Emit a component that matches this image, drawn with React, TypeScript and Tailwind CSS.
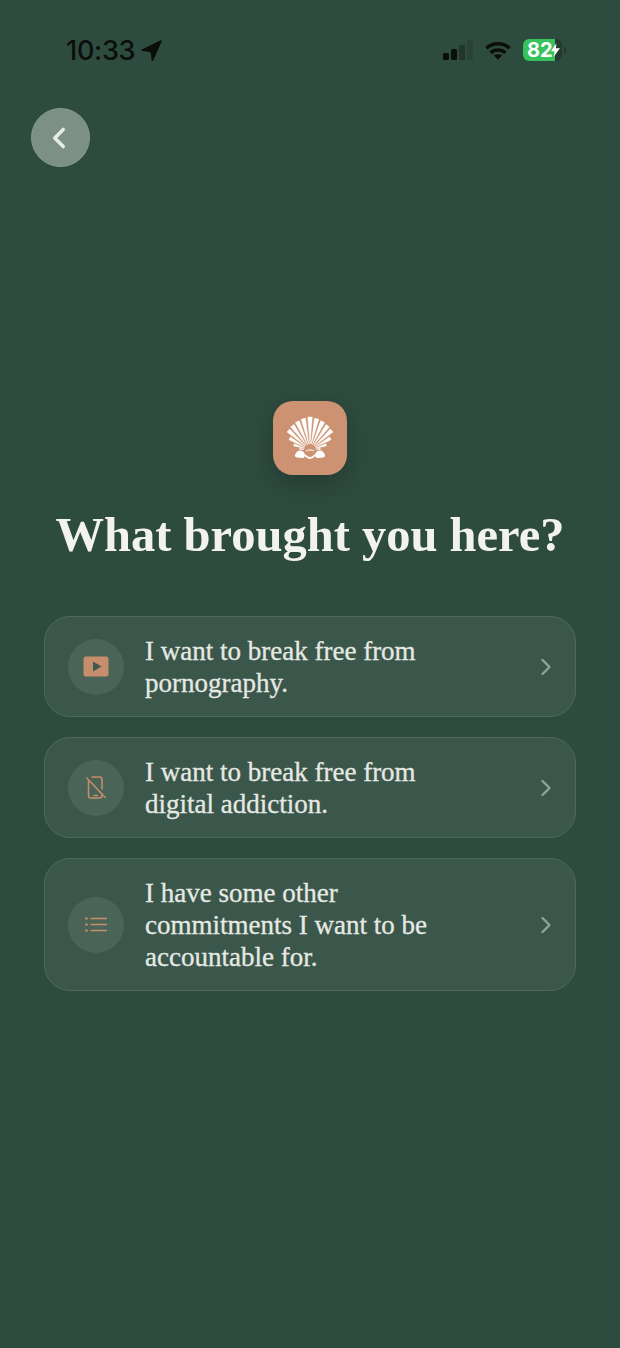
import React from "react";
import { ChevronLeft, ChevronRight } from "lucide-react";

const SERIF = "font-['Liberation_Serif',serif]";

const options = [
  { icon: "play", lines: ["I want to break free from", "pornography."] },
  { icon: "phone", lines: ["I want to break free from", "digital addiction."] },
  { icon: "list", lines: ["I have some other", "commitments I want to be", "accountable for."] },
];

// Fan of ribs for the shell logo
const ribs = Array.from({ length: 15 }, (_, i) => -84 + i * 12);

const ribLength = (angle: number) => {
  const abs = Math.abs(angle);
  return abs <= 50 ? 33 - (abs / 50) * 4 : 29 - (abs - 50) * 0.55;
};

const Shell = () => (
  <svg width="50" height="46" viewBox="0 0 50 46" fill="none">
    {ribs.map((angle) => {
      const a = (angle * Math.PI) / 180;
      const spread = 0.068;
      const r = ribLength(angle);
      const cx = 25;
      const cy = 35;
      const x1 = cx + r * Math.sin(a - spread);
      const y1 = cy - r * Math.cos(a - spread);
      const x2 = cx + r * Math.sin(a + spread);
      const y2 = cy - r * Math.cos(a + spread);
      const x0 = cx + 6 * Math.sin(a);
      const y0 = cy - 6 * Math.cos(a);
      return <path key={angle} d={`M${x0} ${y0}L${x1} ${y1}L${x2} ${y2}Z`} fill="#fff" stroke="#fff" strokeWidth="0.5" strokeLinejoin="round" />;
    })}
    <path d="M10 40c1-4 5-6 8-3.500 2 1.500 2.500 4 1.500 5.500-1 1.200-3.500 1-5.500.8-3-.3-4.500-1-4-2.800Z" fill="#fff" />
    <path d="M40 40c-1-4-5-6-8-3.500-2 1.500-2.500 4-1.500 5.500 1 1.200 3.500 1 5.500.8 3-.3 4.500-1 4-2.800Z" fill="#fff" />
    <path d="M20 40c2 2.500 3.500 3 5 3s3-.5 5-3" stroke="#fff" strokeWidth="1.800" />
    <path d="M21 36c2-1.500 6-1.500 8 0" stroke="#fff" strokeWidth="1" />
  </svg>
);

const PlayIcon = () => (
  <svg width="26" height="21" viewBox="0 0 26 21">
    <rect x="0.500" y="0.500" width="25" height="20" rx="2.500" fill="#c68e6c" />
    <path d="M10 5.500l8.500 5-8.500 5Z" fill="#3f5a4e" />
  </svg>
);

const PhoneOffIcon = () => (
  <svg width="20" height="23" viewBox="0 0 20 23" fill="none" stroke="#c68e6c" strokeWidth="1.500" strokeLinecap="round" strokeLinejoin="round">
    <path d="M6 1h7.500c1.500 0 2.500 1 2.500 2.500V13" />
    <path d="M2.500 5V19.500c0 1.500 1 2.500 2.500 2.500h8.500c1.500 0 2.500-1 2.500-2.500V18" />
    <path d="M8 19.500h3.500" />
    <path d="M0.800 2l18.400 19.500" />
  </svg>
);

const ListIcon = () => (
  <svg width="22" height="15" viewBox="0 0 22 15" fill="none" stroke="#c68e6c" strokeWidth="1.500" strokeLinecap="round">
    <circle cx="1.500" cy="1.500" r="1.300" fill="#c68e6c" stroke="none" />
    <circle cx="1.500" cy="7.500" r="1.300" fill="#c68e6c" stroke="none" />
    <circle cx="1.500" cy="13.500" r="1.300" fill="#c68e6c" stroke="none" />
    <path d="M6 1.500h15.500M6 7.500h15.500M6 13.500h15.500" />
  </svg>
);

const OptionIcon = ({ name }: { name: string }) => {
  if (name === "play") return <PlayIcon />;
  if (name === "phone") return <PhoneOffIcon />;
  return <ListIcon />;
};

const StatusBar = () => (
  <div className="flex h-[100px] shrink-0 items-center justify-between pl-[66px] pr-[54px]">
    <div className="flex items-center gap-[6px]">
      <span className="font-['Inter',sans-serif] text-[27px] font-medium leading-none tracking-[-0.3px] text-[#0a0f0c]">10:33</span>
      <svg width="21" height="21" viewBox="0 0 22 22">
        <path d="M21 1L1 10.500l9.500 1.500 1.500 9.500Z" fill="#0a0f0c" stroke="#0a0f0c" strokeWidth="1.500" strokeLinejoin="round" />
      </svg>
    </div>
    <div className="flex items-center gap-3">
      <svg width="30" height="20" viewBox="0 0 30 20">
        <rect x="0" y="13" width="6" height="7" rx="1.500" fill="#0a0f0c" />
        <rect x="8" y="9" width="6" height="11" rx="1.500" fill="#0a0f0c" />
        <rect x="16" y="5" width="6" height="15" rx="1.500" fill="#22362d" />
        <rect x="24" y="0" width="6" height="20" rx="1.500" fill="#2a4137" />
      </svg>
      <svg width="26" height="19" viewBox="0 0 28 20" fill="none" stroke="#0a0f0c" strokeWidth="3.800">
        <path d="M1.500 7.500c7-6.500 18-6.500 25 0" />
        <path d="M6 12.500c4.500-4 11.500-4 16 0" />
        <path d="M14 20l-4.500-4.500c2.500-2 6.500-2 9 0Z" fill="#0a0f0c" stroke="none" />
      </svg>
      <div className="flex items-center gap-[2px]">
        <div className="relative flex h-[22px] w-[39px] items-center overflow-hidden rounded-[6px] bg-[#26392f]">
          <div className="flex h-full w-[32px] items-center bg-[#36c25c] pl-[4px]">
            <span className="font-['Inter',sans-serif] text-[20px] font-bold leading-none text-white">82</span>
          </div>
          <svg className="absolute left-[28px] top-[4px]" width="9" height="14" viewBox="0 0 10 15">
            <path d="M6 0L0 9h4l-1 6 7-9.500H5.500Z" fill="#fff" />
          </svg>
        </div>
        <div className="h-[7px] w-[2px] rounded-r-sm bg-[#26392f]" />
      </div>
    </div>
  </div>
);

export default function App() {
  return (
    <div className="flex h-[1348px] w-[620px] flex-col overflow-hidden bg-[#2e4b3f]">
      <StatusBar />
      <div className="pl-[31px] pt-2">
        <button className="flex h-[59px] w-[59px] items-center justify-center rounded-full border border-[#879b92] bg-[#7c9087]">
          <ChevronLeft size={34} color="#e6ebe7" strokeWidth={2.500} className="-ml-[3px]" />
        </button>
      </div>
      <div className="mt-[234px] flex flex-col items-center">
        <div className="flex h-[74px] w-[74px] items-center justify-center rounded-[20px] bg-[#cc9271] shadow-[0_8px_22px_rgba(0,0,0,0.22)]">
          <Shell />
        </div>
        <h1 className={`${SERIF} mt-[31px] text-[48.500px] font-bold leading-[58px] text-[#f2f3ee]`}>What brought you here?</h1>
      </div>
      <div className="mx-[44px] mt-[52px] flex flex-col gap-5">
        {options.map((option) => (
          <div
            key={option.icon}
            className="flex items-center rounded-[26px] border border-[#4f6a5c] bg-[#3b574b] py-[17.500px] pl-[23px] pr-[15px]"
          >
            <div className="flex h-14 w-14 shrink-0 items-center justify-center rounded-full bg-[#4a6458]">
              <OptionIcon name={option.icon} />
            </div>
            <div className={`${SERIF} ml-[21px] flex-1 text-[27px] leading-8 text-[#e6e9e3] [-webkit-text-stroke:0.3px_#e6e9e3]`}>
              {option.lines.map((line) => (
                <div key={line}>{line}</div>
              ))}
            </div>
            <ChevronRight size={28} color="#8fa49a" strokeWidth={2} />
          </div>
        ))}
      </div>
    </div>
  );
}
